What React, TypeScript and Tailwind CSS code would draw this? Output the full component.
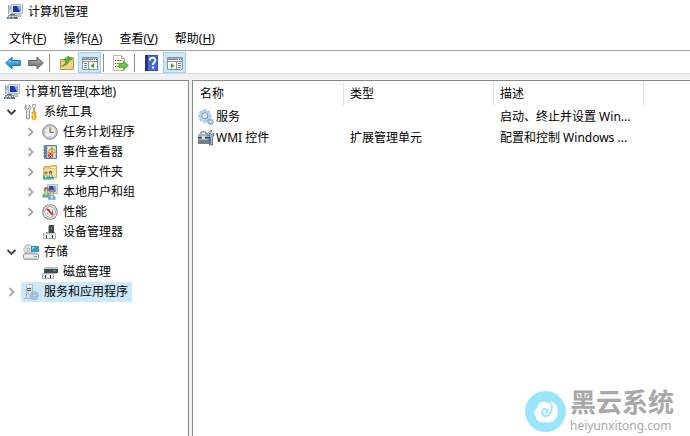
import React, { useState } from "react";

type IconProps = {
  className?: string;
};

type TreeNode = {
  id: string;
  label: string;
  icon: React.FC<IconProps>;
  expandable?: boolean;
  children?: TreeNode[];
};

type MenuItem = {
  label: string;
  accessKey: string;
};

type ListItem = {
  name: string;
  type: string;
  description: string;
  icon: React.FC<IconProps>;
};

const Svg: React.FC<{ children: React.ReactNode }> = ({ children }) => (
  <svg width="16" height="16" viewBox="0 0 16 16" fill="none" className="shrink-0" aria-hidden="true">
    {children}
  </svg>
);

const ComputerIcon: React.FC = () => (
  <Svg>
    <path d="M1 1h4v9H1z" fill="#d5d9dc" />
    <path d="M1.500 1v9" stroke="#a3a9ae" />
    <path d="M2 3h2M2 5h2" stroke="#8f979d" />
    <path d="M4.500.5h11v9h-11z" fill="#e3e7ee" stroke="#b4bac3" />
    <path d="M6 2h8v6H6z" fill="#1536b8" />
    <path d="M10 2h4v6h-1z" fill="#86a5f2" />
    <path d="M9 10h5v2H9z" fill="#c3c7cc" />
    <path d="M1 11h9v4H1z" fill="#87949d" />
    <path d="M3 10h5v1H3z" fill="#56636c" />
    <path d="M2 12h2v1H2zM5 12h2v1H5zM8 12h1v1H8z" fill="#dce5ea" />
    <path d="M0 13h11v2H0z" fill="#667681" />
    <path d="M1 14h2M5 14h2" stroke="#c1ccd3" />
    <path d="M11 12h3v1h-3z" fill="#a9afb5" />
  </Svg>
);

const ToolsIcon: React.FC = () => (
  <Svg>
    <path
      d="M3 1v3l1 1h1l1-1V1c2 1 2.500 4 .5 5.500V14c0 1.500-3 1.500-3 0V6.500C1.500 5 1.500 2 3 1z"
      fill="#e3e5e7"
      stroke="#858c90"
      strokeWidth=".9"
    />
    <path d="M9.500.5h3v2l-1 1v4h-1v-4l-1-1z" fill="#e9e9e9" stroke="#8a8f92" strokeWidth=".8" />
    <path d="M9 8h4v1.500l-.7 1 .7 1V14c0 2-4 2-4 0v-2.500l.7-1L9 9.500z" fill="#f6b51d" stroke="#d8940f" strokeWidth=".8" />
    <path d="M10.500 9v6" stroke="#ffe08a" />
  </Svg>
);

const ClockIcon: React.FC = () => (
  <Svg>
    <circle cx="8" cy="8" r="7.300" fill="#d3d5d7" stroke="#85898c" />
    <circle cx="8" cy="8" r="5.800" fill="#eef1f4" stroke="#b3b7ba" strokeWidth=".7" />
    <path d="M8 8V2.500A5.500 5.500 0 0 1 13.500 8z" fill="#f7dfb4" />
    <path d="M8 3.500V8.500h4" stroke="#6b7075" strokeWidth="1.200" />
    <path d="M3 8h1M8 12v1M4.500 4.500l.6.6" stroke="#8a9095" strokeWidth=".8" />
  </Svg>
);

const EventIcon: React.FC = () => (
  <Svg>
    <path d="M2.500 1.500h12v13h-12z" fill="#b9cde6" stroke="#5c7bab" />
    <path d="M3 2h2v12H3z" fill="#6583b2" />
    <path d="M1 3h3M1 6h3M1 9h3M1 12h3" stroke="#7b8084" />
    <path d="M6 3h7v2H6zM6 7h7v1H6zM6 12h7v1H6z" fill="#e8f0f8" />
    <path d="M10 2.500l4 6H6z" fill="#ffdf3e" stroke="#c9a120" strokeWidth=".7" />
    <path d="M10 4.500v2M10 7.200v.8" stroke="#423706" />
    <circle cx="8.500" cy="11.500" r="2.500" fill="#d83a32" />
    <path d="M7.500 10.500l2 2m0-2l-2 2" stroke="#fff" strokeWidth=".9" />
  </Svg>
);

const SharedFolderIcon: React.FC = () => (
  <Svg>
    <path d="M1.500 3.500l1-1H8l1-1h5.500v12h-13z" fill="#e8c96c" stroke="#c4a24b" strokeWidth=".8" />
    <path d="M2 5h12v8H2z" fill="#f8e39d" />
    <path d="M9 3h5v1H9z" fill="#fff7d7" />
    <circle cx="4" cy="9" r="1.700" fill="#9a7146" />
    <circle cx="8.500" cy="8.500" r="1.700" fill="#7c5430" />
    <path d="M3.500 9h1v1.500h-1zM8 8.500h1V10H8z" fill="#f4cfa8" />
    <path d="M.8 15.500c0-6 6-6 6 0z" fill="#48a876" />
    <path d="M5.800 15.500c0-7 6-7 6 0z" fill="#58a4a3" />
    <path d="M3.500 11.500l.5 2 .5-2M8.200 11l.5 2 .5-2" stroke="#fff" strokeWidth=".8" />
  </Svg>
);

const UsersIcon: React.FC = () => (
  <Svg>
    <path d="M5.500.5h10v9h-10z" fill="#d9dde4" stroke="#b6bcc4" />
    <path d="M7 2h7v6H7z" fill="#2748bd" />
    <path d="M11 2h3v6h-1z" fill="#8daaf0" />
    <circle cx="4.300" cy="5.500" r="2.600" fill="#99794a" />
    <path d="M3.300 5.500h2V8h-2z" fill="#efc696" />
    <path d="M.3 13.500c0-7 8-7 8 0z" fill="#6aa97a" />
    <circle cx="9.800" cy="8" r="2.500" fill="#c08d49" />
    <path d="M8.800 8h2v2.500h-2z" fill="#f2cca0" />
    <path d="M5.800 15.800c0-7 8-7 8 0z" fill="#7ba6d0" />
    <path d="M9 11.500l.8 3 .8-3M3.500 9l.5 2 1-2" stroke="#eef5fa" strokeWidth=".8" />
  </Svg>
);

const PerformanceIcon: React.FC = () => (
  <Svg>
    <circle cx="8" cy="8" r="7.300" fill="#fff" stroke="#858585" strokeWidth="1.100" />
    <circle cx="8" cy="8" r="5.400" fill="#fff" stroke="#8d8d8d" strokeWidth=".9" />
    <path d="M5.500 8v3M10.500 5v3" stroke="#9a9a9a" strokeWidth=".8" />
    <path d="M4.500 5.500h1.200L10.500 11" stroke="#dc1f1f" strokeWidth="1.800" />
    <path d="M10.700 7v4.500M7 5v2" stroke="#dc1f1f" />
  </Svg>
);

const DeviceIcon: React.FC = () => (
  <Svg>
    <path d="M7 1h5v9H7z" fill="#44484a" />
    <path d="M6 2h1v7H6z" fill="#a4a9ab" />
    <path d="M9 3h1v2H9z" fill="#22d451" />
    <path d="M4 8h3v1H4zM12 8h1v1h-1z" fill="#85898b" />
    <path d="M1.500 9.500h12v5h-12z" fill="#ebeced" stroke="#a8acae" />
    <path d="M4 11h1v3H4zM10 11h1v3h-1z" fill="#303538" />
    <path d="M2 9h11v1H2z" fill="#c3c7c9" />
  </Svg>
);

const StorageIcon: React.FC = () => (
  <Svg>
    <circle cx="5.500" cy="5.500" r="4.700" fill="#dce6ea" stroke="#9aa6ac" strokeWidth=".8" />
    <path d="M5.500 5.500l-3-3M5.500 5.500l-3 3" stroke="#b3cbb6" />
    <circle cx="5.500" cy="5.500" r="1.300" fill="#fff" stroke="#879298" strokeWidth=".7" />
    <path d="M8.500 2.500h7v5h-7z" fill="#1aa4cc" stroke="#4c7685" strokeWidth=".8" />
    <path d="M9 3h3L9 6z" fill="#8edff1" />
    <path d="M.5 10.500l2-1.500h11l2 1.500v4l-1 1h-13l-1-1z" fill="#c6cacd" stroke="#8b9195" strokeWidth=".8" />
    <path d="M1 11h14v3H1z" fill="#e5e7e9" />
    <path d="M11 12h3v1h-3z" fill="#42c853" />
    <path d="M2 12h6" stroke="#f8f8f8" />
  </Svg>
);

const DiskIcon: React.FC = () => (
  <Svg>
    <path d="M2 5l2-2h11l1 2v4H2z" fill="#44494b" />
    <path d="M2 5l2-2h11l1 2z" fill="#c0c4c6" />
    <path d="M11 6h3v1h-3z" fill="#34cb54" />
    <path d="M.5 9.500h11v5H.5z" fill="#eceded" stroke="#a9acae" />
    <path d="M3 11h1v3H3zM8 11h1v3H8z" fill="#303538" />
    <path d="M12 9h3v1h-3z" fill="#b5b9bb" />
  </Svg>
);

const GearPath: React.FC<{ fill: string; stroke: string }> = ({ fill, stroke }) => (
  <path
    d="M5.500.5h2l.5 1.700 1.200.5L10.800 1.700l1.400 1.400-1 1.600.5 1.200 1.700.5v2l-1.700.5-.5 1.200 1 1.600-1.400 1.400-1.600-1-1.200.5-.5 1.700h-2L5 12.600l-1.200-.5-1.600 1-1.400-1.400 1-1.600L1.300 9-.4 8.500v-2L1.300 6l.5-1.200-1-1.600 1.400-1.400 1.600 1L5 2.200z"
    fill={fill}
    stroke={stroke}
    strokeWidth=".8"
  />
);

const ServicesIcon: React.FC = () => (
  <Svg>
    <g transform="translate(.8 .2) scale(.93)">
      <GearPath fill="#bddbed" stroke="#8fb5cd" />
      <circle cx="6.500" cy="7" r="3.200" fill="#fff" stroke="#6e9abb" strokeWidth="1.200" />
      <circle cx="6.500" cy="7" r="1.800" fill="#d5e9f4" />
    </g>
    <g transform="translate(9.500 9.500) scale(.46)">
      <GearPath fill="#9bbdd3" stroke="#6b91ab" />
      <circle cx="6.500" cy="7" r="2" fill="#fff" />
    </g>
  </Svg>
);

const ServerIcon: React.FC = () => (
  <Svg>
    <path d="M3.500 1.500l1-1h5v13l-1 1h-5z" fill="#d9e1e7" stroke="#a3aeb6" strokeWidth=".8" />
    <path d="M4 4.500h4M4 6.500h4" stroke="#4a545b" />
    <path d="M4 2h5" stroke="#fff" />
    <path d="M1 14h7v1H1z" fill="#a9b7c1" />
    <path d="M5 9h1v1H5z" fill="#54bb6a" />
    <g transform="translate(7.300 7.300) scale(.62)">
      <GearPath fill="#a9cae0" stroke="#6a94b1" />
      <circle cx="6.500" cy="7" r="2.300" fill="#e9f5fc" stroke="#5689ac" />
    </g>
  </Svg>
);

const WmiIcon: React.FC = () => (
  <Svg>
    <path d="M3 4V2h5v2" stroke="#59636b" />
    <path d="M0 4h12v10H0z" fill="#6f7f8c" />
    <path d="M0 4h12v3H0z" fill="#a5b1ba" />
    <path d="M0 7h12v1H0z" fill="#3b464f" />
    <path d="M1 9h9v1H1z" fill="#a7b4bd" />
    <path d="M4 6h3v3H4z" fill="#dce1e4" />
    <path d="M9 4l4-4 1 1-4 5z" fill="#dce1e4" stroke="#535d65" strokeWidth=".7" />
    <path d="M11.500 3v3l1 1v8h2V7l1-1V3l-1.500 1.500h-1z" fill="#aac5dd" stroke="#45667f" strokeWidth=".8" />
    <path d="M11 9h1v6h-1z" fill="#3d76aa" />
  </Svg>
);

const BackIcon: React.FC = () => (
  <Svg>
    <path d="M.7 8L7 2v3.500h8.300v5H7V14z" fill="#2d9fe1" stroke="#2a719e" strokeLinejoin="round" />
    <path d="M2.500 7.500L6 4.200v2.300h8v1z" fill="#6fcdf8" />
  </Svg>
);

const ForwardIcon: React.FC = () => (
  <Svg>
    <path d="M15.300 8L9 2v3.500H.7v5H9V14z" fill="#858585" stroke="#636363" strokeLinejoin="round" />
    <path d="M13.500 7.500L10 4.200v2.300H2v1z" fill="#ababab" />
  </Svg>
);

const UpFolderIcon: React.FC = () => (
  <Svg>
    <path d="M1.500 4.500h7l1-2h5v12h-13z" fill="#e3be6b" stroke="#b9913f" strokeWidth=".9" />
    <path d="M2 7h12v7H2z" fill="#f0d28a" />
    <path d="M2.500 11c3.500-1 4.500-3 4.500-6H5L9.500 1 13 4.500h-3C10 8 7 11 2.500 11z" fill="#4fbd38" stroke="#2d8f20" strokeWidth=".7" />
  </Svg>
);

const WindowFrame: React.FC<{ children: React.ReactNode }> = ({ children }) => (
  <Svg>
    <path d="M.5 2.500h15v12H.5z" fill="#fff" stroke="#8a9197" />
    <path d="M1 3h14v1H1z" fill="#aab1b7" />
    <path d="M1 4h10v1H1z" fill="#7b838a" />
    <path d="M12 4h1v1h-1zM14 4h1v1h-1z" fill="#4c545b" />
    <path d="M1 6h14v1H1z" fill="#8b9298" />
    {children}
  </Svg>
);

const ConsoleTreeIcon: React.FC = () => (
  <WindowFrame>
    <path d="M6 7h1v7H6z" fill="#8b9298" />
    <path d="M2 8.500h3M2 10.500h3M2 12.500h3" stroke="#5c84ae" />
    <path d="M12 8v5.500L8.500 10.700z" fill="#35ac26" />
  </WindowFrame>
);

const ActionPaneIcon: React.FC = () => (
  <WindowFrame>
    <path d="M9 7h1v7H9z" fill="#8b9298" />
    <path d="M11 8.500h3M11 10.500h3M11 12.500h3" stroke="#5c84ae" />
    <path d="M4 8v5.500l3.500-2.800z" fill="#35ac26" />
  </WindowFrame>
);

const ExportIcon: React.FC = () => (
  <Svg>
    <path d="M.5.5h8l3 3v12H.5z" fill="#fffbe9" stroke="#c0b7a4" />
    <path d="M8.500.5v3h3" fill="#eee3ca" stroke="#b5ab96" />
    <path d="M2 5.500h1M2 8.500h1M2 11.500h1" stroke="#333" />
    <path d="M4 5.500h5M4 8.500h5M4 11.500h3" stroke="#8f8c86" />
    <path d="M6 8.500h4.500V6l5 4.500-5 4.500v-2.500H6z" fill="#63c84c" stroke="#3d9c31" strokeWidth=".7" />
  </Svg>
);

const HelpIcon: React.FC = () => (
  <Svg>
    <path d="M1 0h13v16H1z" fill="#3451b9" />
    <path d="M1 0h3v16H1z" fill="#24377f" />
    <path d="M4 1h9v14H4z" fill="#496ad0" />
    <path d="M5.800 5.500C5.800 1.800 11.300 2 11.300 5.200 11.300 7.500 8.800 7.600 8.800 10" stroke="#fff" strokeWidth="1.900" />
    <path d="M8 11.500h2v2H8z" fill="#fff" />
  </Svg>
);

const tree: TreeNode[] = [
  {
    id: "system",
    label: "系统工具",
    icon: ToolsIcon,
    expandable: true,
    children: [
      { id: "tasks", label: "任务计划程序", icon: ClockIcon, expandable: true },
      { id: "events", label: "事件查看器", icon: EventIcon, expandable: true },
      { id: "shares", label: "共享文件夹", icon: SharedFolderIcon, expandable: true },
      { id: "users", label: "本地用户和组", icon: UsersIcon, expandable: true },
      { id: "performance", label: "性能", icon: PerformanceIcon, expandable: true },
      { id: "devices", label: "设备管理器", icon: DeviceIcon },
    ],
  },
  {
    id: "storage",
    label: "存储",
    icon: StorageIcon,
    expandable: true,
    children: [{ id: "disks", label: "磁盘管理", icon: DiskIcon }],
  },
  { id: "services", label: "服务和应用程序", icon: ServerIcon, expandable: true },
];

const menus: MenuItem[] = [
  { label: "文件", accessKey: "F" },
  { label: "操作", accessKey: "A" },
  { label: "查看", accessKey: "V" },
  { label: "帮助", accessKey: "H" },
];

const items: ListItem[] = [
  { name: "服务", type: "", description: "启动、终止并设置 Win...", icon: ServicesIcon },
  { name: "WMI 控件", type: "扩展管理单元", description: "配置和控制 Windows ...", icon: WmiIcon },
];

const Separator: React.FC = () => <span className="ml-[2px] mr-[5px] h-[18px] w-px bg-[#8c8c8c]" />;

const ToolButton: React.FC<{ label: string; pressed?: boolean; children: React.ReactNode }> = ({
  label,
  pressed,
  children,
}) => (
  <button
    type="button"
    aria-label={label}
    className={`flex h-[21px] w-[23px] items-center justify-center border ${
      pressed ? "border-[#99d1ff] bg-[#cce8ff]" : "border-transparent"
    }`}
  >
    {children}
  </button>
);

const App: React.FC = () => {
  const [selectedId, setSelectedId] = useState<string>("services");
  const [expanded, setExpanded] = useState<{ [key: string]: boolean }>({ system: true, storage: true });

  // Toggle expand/collapse for a tree node
  const toggleNode = (id: string) => {
    setExpanded((prev) => ({ ...prev, [id]: !prev[id] }));
  };

  const renderNodes = (nodes: TreeNode[]) =>
    nodes.map((node) => {
      const Icon = node.icon;
      const open = !!expanded[node.id];
      return (
        <li key={node.id}>
          <div className="flex h-5 items-center">
            {node.expandable ? (
              <button
                type="button"
                aria-label={node.label}
                aria-expanded={open}
                onClick={() => toggleNode(node.id)}
                className="w-[21px] pl-1"
              >
                <Svg>
                  {open ? (
                    <path d="M3.500 6L7.500 10l4-4" stroke="#404040" strokeWidth="1.800" />
                  ) : (
                    <path d="M5.500 4l4 4-4 4" stroke="#a6a6a6" strokeWidth="1.800" />
                  )}
                </Svg>
              </button>
            ) : (
              <span className="w-[21px]" />
            )}
            <button
              type="button"
              onClick={() => setSelectedId(node.id)}
              className={`flex h-5 items-center gap-[5px] pl-[2px] pr-1 whitespace-nowrap ${
                selectedId === node.id ? "bg-[#cce8ff]" : ""
              }`}
            >
              <Icon />
              {node.label}
            </button>
          </div>
          {node.children && open && <ul className="pl-[19px]">{renderNodes(node.children)}</ul>}
        </li>
      );
    });

  return (
    <div className="relative flex min-h-screen flex-col bg-white font-['Noto_Sans','Noto_Sans_CJK_SC',sans-serif] text-[12px] leading-4 text-black">
      {/* Title bar */}
      <header className="flex h-6 items-center gap-[5px] px-[7px]">
        <ComputerIcon />
        <h1>计算机管理</h1>
      </header>

      {/* Menu bar */}
      <nav className="flex h-[26px] gap-px pt-1 pl-px">
        {menus.map((menu) => (
          <button key={menu.accessKey} type="button" className="px-2">
            {menu.label}(<u>{menu.accessKey}</u>)
          </button>
        ))}
      </nav>

      {/* Toolbar */}
      <div className="flex h-6 items-center border-t border-b border-t-[#a0a0a0] border-b-[#dadada] pt-px pl-px">
        <ToolButton label="后退">
          <BackIcon />
        </ToolButton>
        <ToolButton label="前进">
          <ForwardIcon />
        </ToolButton>
        <Separator />
        <ToolButton label="向上">
          <UpFolderIcon />
        </ToolButton>
        <ToolButton label="控制台树" pressed>
          <ConsoleTreeIcon />
        </ToolButton>
        <Separator />
        <ToolButton label="导出列表">
          <ExportIcon />
        </ToolButton>
        <Separator />
        <ToolButton label="帮助">
          <HelpIcon />
        </ToolButton>
        <ToolButton label="操作窗格" pressed>
          <ActionPaneIcon />
        </ToolButton>
      </div>

      <main className="flex flex-1 gap-[3px] bg-[#f0f0f0] pt-[6px]">
        {/* Console tree */}
        <aside className="w-[189px] shrink-0 border-t border-r border-[#828790] bg-white pt-px">
          <button
            type="button"
            onClick={() => setSelectedId("root")}
            className={`ml-[2px] flex h-5 items-center gap-[5px] pl-[2px] pr-1 ${
              selectedId === "root" ? "bg-[#cce8ff]" : ""
            }`}
          >
            <ComputerIcon />
            计算机管理(本地)
          </button>
          <ul>{renderNodes(tree)}</ul>
        </aside>

        {/* Result list */}
        <section className="min-w-0 flex-1 border-t border-l border-[#828790] bg-white pt-px">
          <table className="w-full table-fixed border-separate border-spacing-0 text-left whitespace-nowrap">
            <colgroup>
              <col className="w-[151px]" />
              <col className="w-[150px]" />
              <col className="w-[150px]" />
              <col />
            </colgroup>
            <thead>
              <tr className="h-6">
                <th className="border-r border-[#e5e5e5] pl-[7px] font-normal">名称</th>
                <th className="border-r border-[#e5e5e5] pl-[6px] font-normal">类型</th>
                <th className="border-r border-[#e5e5e5] pl-[6px] font-normal">描述</th>
                <td />
              </tr>
            </thead>
            <tbody>
              {items.map((item) => (
                <tr key={item.name} className="h-[21px]">
                  <td className="pl-[5px]">
                    <span className="flex items-center gap-[2px]">
                      <item.icon />
                      {item.name}
                    </span>
                  </td>
                  <td className="pl-[6px]">{item.type}</td>
                  <td className="pl-[6px]">{item.description}</td>
                  <td />
                </tr>
              ))}
            </tbody>
          </table>
        </section>
      </main>

      {/* Site mark */}
      <div className="pointer-events-none absolute right-4 bottom-[2px] flex items-center gap-1 text-[#a8a8a8]">
        <svg width="41" height="41" viewBox="0 0 41 41" fill="none" aria-hidden="true">
          <circle cx="20.500" cy="20.500" r="20.500" fill="#99e5fe" />
          <path
            d="M25 9.500c6 2 9 8 7.500 14-1.500 6-7 9.500-13 7.500-4 1-8-1-8.500-5-3-3-2-8 1.500-9 .5-5 6-8 10-5.500 1.500 0 3 .5 4 1.500.3-1.500-.5-2.500-1.500-3.500z"
            fill="#fff"
          />
          <path
            d="M26.500 13.500c1.500 5-1 11.500-6 11.500-4.500-.5-4.500-7-.3-7 2.500.2 2.800 3.500.8 4"
            stroke="#99e5fe"
            strokeWidth="2"
            strokeLinecap="round"
          />
        </svg>
        <div>
          <div className="font-['Liberation_Sans','Noto_Sans_CJK_SC',sans-serif] text-[26px] leading-[30px] font-bold">
            黑云系统
          </div>
          <div>heiyunxitong.com</div>
        </div>
      </div>
    </div>
  );
};

export default App;
